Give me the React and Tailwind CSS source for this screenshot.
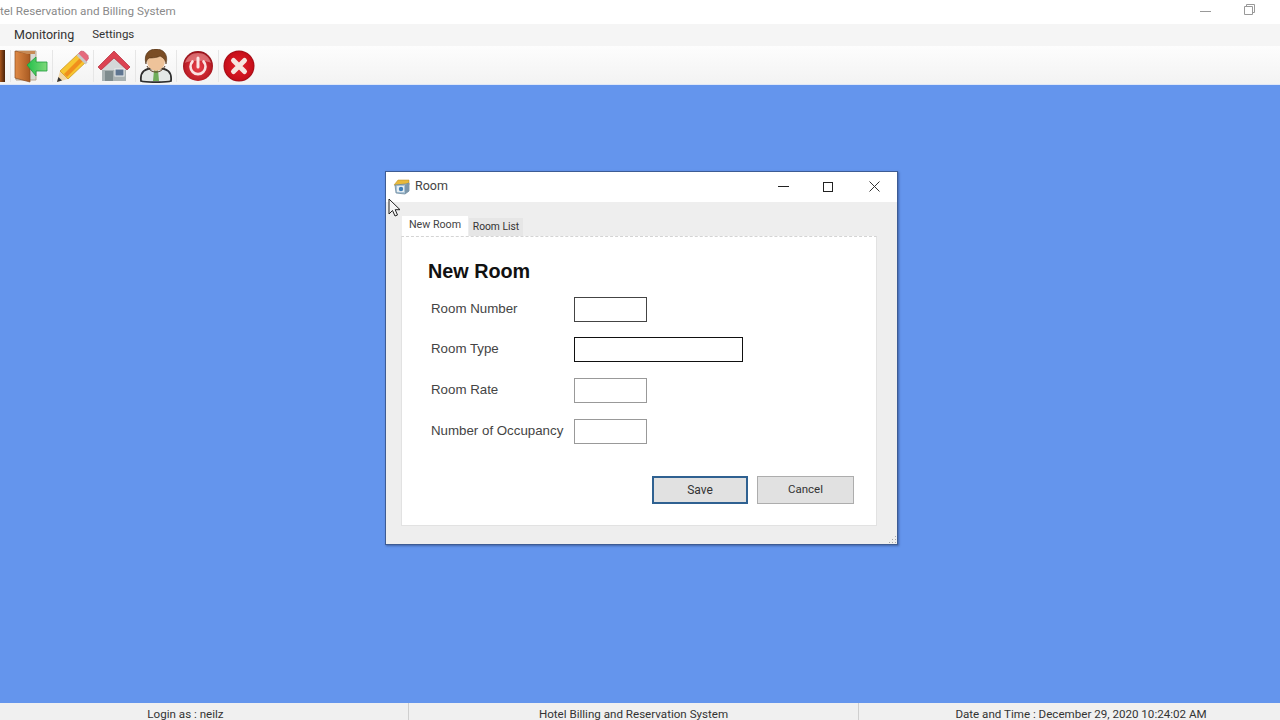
const sans = "font-['Liberation_Sans',Arial,sans-serif]";
const ui = "font-['Roboto',sans-serif]";

function DoorIcon() {
  return (
    <svg width="36" height="34" viewBox="0 0 36 34">
      <defs>
        <linearGradient id="door" x1="0" x2="1"><stop offset="0" stopColor="#e08a45" /><stop offset="1" stopColor="#a85a22" /></linearGradient>
        <linearGradient id="arrow" x1="0" x2="1"><stop offset="0" stopColor="#22c04a" /><stop offset="1" stopColor="#7fd87a" /></linearGradient>
      </defs>
      <path d="M3 2h20v29H3z" fill="#d9d9d4" stroke="#b9a58f" strokeWidth="1" />
      <path d="M2 2l15 3v28L2 29z" fill="url(#door)" stroke="#8a4a1c" strokeWidth=".7" />
      <path d="M4 2h18v3H14z" fill="#c78a55" />
      <path d="M14 16L23 8v5h11v9H23v5z" fill="url(#arrow)" stroke="#1f9c3c" strokeWidth=".8" />
    </svg>
  );
}

function PencilIcon() {
  return (
    <svg width="34" height="34" viewBox="0 0 34 34">
      <path d="M1 33l3-11 8 8z" fill="#f2d7a8" />
      <path d="M1 33l1.400-5 3.600 3.600z" fill="#333" />
      <path d="M4 22L22 5l8 8-18 17z" fill="#f7c531" stroke="#c98f14" strokeWidth=".7" />
      <path d="M8 25L25 8l3 3-17 17z" fill="#f08f1d" />
      <path d="M22 5l3-3 3 .5 4 4 .5 3-2.500 3.500z" fill="#e5697c" stroke="#b94a5a" strokeWidth=".5" />
      <path d="M20.500 6.500l2-2 9 9-2 2z" fill="#c8c8c8" />
    </svg>
  );
}

function HouseIcon() {
  return (
    <svg width="34" height="34" viewBox="0 0 34 34">
      <path d="M5 16L17 5l12 11v16H5z" fill="#d4d8d8" />
      <path d="M5 21h24v11H5z" fill="#a9b2b3" />
      <path d="M1 18L17 2l16 16-3 3L17 9 4 21z" fill="#dc4352" stroke="#b32a3a" strokeWidth=".7" />
      <rect x="8" y="22" width="8" height="10" fill="#7f8c8e" />
      <rect x="18" y="20" width="9" height="7" fill="#5e7590" stroke="#eef0f0" />
    </svg>
  );
}

function PersonIcon() {
  return (
    <svg width="34" height="34" viewBox="0 0 34 34">
      <path d="M2 32c-1-9 3-13 15-13s16 4 15 13c-4 1.500-26 1.500-30 0z" fill="#e4e8e6" stroke="#2e2e2e" strokeWidth="1.800" />
      <path d="M15 21h4l1 11h-6z" fill="#6fae5a" />
      <ellipse cx="17" cy="12" rx="9" ry="10" fill="#eec39a" />
      <path d="M7 15C4 4 11 0 17 0s13 4 10 15c-.5-5-4-7-6-8-3 2-11 2-11 2-2 2-3 3-3 6z" fill="#7a4d25" stroke="#4f3015" strokeWidth=".6" />
      <path d="M8 17c2 4 5 6 9 6s7-2 9-6" fill="none" stroke="#5e4028" strokeWidth="1" />
    </svg>
  );
}

function PowerIcon() {
  return (
    <svg width="32" height="32" viewBox="0 0 32 32">
      <defs>
        <radialGradient id="pw" cx=".5" cy=".55" r=".55"><stop offset="0" stopColor="#e8404a" /><stop offset=".75" stopColor="#c01f28" /><stop offset="1" stopColor="#8f1018" /></radialGradient>
      </defs>
      <circle cx="16" cy="16" r="15" fill="url(#pw)" />
      <path d="M3 13C5 6 10 3 16 3s11 3 13 10c-4-3-22-3-26 0z" fill="#f2a5a8" opacity=".55" />
      <path d="M10.500 11.500a7.500 7.500 0 1 0 11 0" fill="none" stroke="#fbe3e3" strokeWidth="2.600" strokeLinecap="round" />
      <path d="M16 8v9" stroke="#fbe3e3" strokeWidth="3" strokeLinecap="round" />
    </svg>
  );
}

function CloseIcon() {
  return (
    <svg width="32" height="32" viewBox="0 0 32 32">
      <defs>
        <radialGradient id="cl" cx=".5" cy=".5" r=".55"><stop offset="0" stopColor="#e3222c" /><stop offset=".8" stopColor="#c80f1a" /><stop offset="1" stopColor="#7c0a12" /></radialGradient>
      </defs>
      <circle cx="16" cy="16" r="15.500" fill="url(#cl)" />
      <path d="M10.500 10.500l11 11M21.500 10.500l-11 11" stroke="#f6e6e0" strokeWidth="5" strokeLinecap="round" />
    </svg>
  );
}

function RoomIcon() {
  return (
    <svg width="17" height="17" viewBox="0 0 17 17">
      <path d="M1 7l4-5h11v5L6 8z" fill="#e8b93a" stroke="#b98a1f" strokeWidth=".5" />
      <path d="M2 7l11-1 3-1v8l-4 3-9-1z" fill="#a9c3d6" stroke="#5f7d92" strokeWidth=".7" />
      <path d="M4 8h7v6H4z" fill="#e8eef2" />
      <circle cx="8" cy="11" r="2.200" fill="#3d7fb8" />
      <path d="M12 7l4-2v8l-4 3z" fill="#7d97aa" />
    </svg>
  );
}

function ToolButton({ children }) {
  return (
    <div className="w-[41.6px] h-[32px] shrink-0 flex items-center justify-center border-l border-[#e6e6e6]">
      {children}
    </div>
  );
}

function Field({ label, width = "w-[73px]", border, className = "" }) {
  return (
    <div className={`flex items-center h-[25px] ${className}`}>
      <span className={`w-[146px] pl-[3px] -mt-[2px] text-[13.3px] leading-none text-[#444] whitespace-nowrap ${sans}`}>{label}</span>
      <div className={`${width} h-[25px] bg-white border ${border}`} />
    </div>
  );
}

export default function App() {
  return (
    <div className="relative w-[1280px] h-[720px] overflow-hidden flex flex-col bg-[#6495ed]">
      <div className="h-[24px] shrink-0 bg-white flex items-center justify-between overflow-hidden">
        <span className={`-ml-[15px] text-[11.7px] text-[#8a8a8a] whitespace-nowrap ${ui}`}>Hotel Reservation and Billing System</span>
        <div className="flex items-center mr-[25px] gap-[33px]">
          <div className="w-[11px] h-px bg-[#999] -mt-[1px]" />
          <svg width="11" height="11" viewBox="0 0 11 11" className="-mt-[6px]">
            <path d="M.5 2.500h8v8h-8zM2.500 2.500v-2h8v8h-2" fill="none" stroke="#999" />
          </svg>
        </div>
      </div>

      <div className={`h-[22px] shrink-0 bg-[#f5f5f5] flex items-center pl-[14px] gap-[18px] text-[#333] ${ui}`}>
        <span className="text-[12.5px]">Monitoring</span>
        <span className="text-[11.5px]">Settings</span>
      </div>

      <div className="h-[39px] shrink-0 pt-[1px] bg-gradient-to-b from-[#fdfdfd] to-[#f3f3f3] flex items-center border-b border-[#dfe7f7]">
        <div className="w-[10px] h-[32px] shrink-0">
          <div className="w-[5px] h-[32px] bg-gradient-to-r from-[#a8561c] to-[#4a2208]" />
        </div>
        <ToolButton><DoorIcon /></ToolButton>
        <ToolButton><PencilIcon /></ToolButton>
        <ToolButton><HouseIcon /></ToolButton>
        <ToolButton><PersonIcon /></ToolButton>
        <ToolButton><PowerIcon /></ToolButton>
        <ToolButton><CloseIcon /></ToolButton>
      </div>

      <div className="relative flex-1">
        <div className="absolute left-[385px] top-[86px] w-[513px] h-[374px] flex flex-col bg-[#eeeeee] border border-[#3d5c94] shadow-[1px_1px_2px_rgba(30,50,100,0.5)]">
          <div className="h-[30px] shrink-0 bg-white flex items-center pl-[7px] pb-[1px]">
            <RoomIcon />
            <span className={`ml-[5px] text-[12.5px] text-[#444] ${ui}`}>Room</span>
            <div className="ml-auto flex items-center mr-[17px]">
              <div className="w-[11px] h-px bg-[#222] mr-[34px]" />
              <div className="w-[10px] h-[10px] border border-[#222] mr-[36px]" />
              <svg width="11" height="11" viewBox="0 0 11 11">
                <path d="M.5.5l10 10M10.500.5l-10 10" stroke="#333" fill="none" />
              </svg>
            </div>
          </div>

          <div className="flex-1 flex flex-col pl-[15px] pr-[20px] pt-[14px] pb-[18px] relative">
            <div className={`h-[20px] shrink-0 pl-px flex items-end leading-none ${ui}`}>
              <div className="w-[66px] h-[20px] bg-white text-[10.7px] text-[#444] flex items-center justify-center pb-px">New Room</div>
              <div className="w-[54px] h-[18px] ml-px bg-[#e6e6e6] text-[10.3px] text-[#333] flex items-center justify-center pt-px">Room List</div>
            </div>
            <div className="flex-1 bg-white border border-[#e2e2e2] [border-top-style:dashed] border-t-[#d4d4d4] pl-[26px] pr-[22px] pt-[22px]">
              <h1 className={`text-[19.800px] leading-[24px] font-bold text-[#111] ${sans}`}>New Room</h1>
              <div className="mt-[14px] flex flex-col">
                <Field label="Room Number" border="border-[#444]" />
                <Field label="Room Type" width="w-[169px]" border="border-[#111]" className="mt-[15px]" />
                <Field label="Room Rate" border="border-[#999]" className="mt-[16px]" />
                <Field label="Number of Occupancy" border="border-[#999]" className="mt-[16px]" />
              </div>
              <div className={`mt-[32px] flex justify-end gap-[9px] text-[#333] ${ui}`}>
                <div className="w-[96px] h-[28px] text-[12px] bg-[#e1e1e1] border-2 border-[#2f6191] flex items-center justify-center">Save</div>
                <div className="w-[97px] h-[28px] text-[11.5px] bg-[#e1e1e1] border border-[#adadad] flex items-center justify-center">Cancel</div>
              </div>
            </div>
            <svg width="9" height="9" viewBox="0 0 9 9" className="absolute right-0 bottom-0">
              <path d="M7 1h1v1H7zM4 4h1v1H4zM7 4h1v1H7zM1 7h1v1H1zM4 7h1v1H4zM7 7h1v1H7z" fill="#a8a8a8" />
            </svg>
          </div>
        </div>

        <svg width="14" height="21" viewBox="0 0 14 21" className="absolute left-[388px] top-[113px]">
          <path d="M1 1v15l3.500-3.500L7 18l2.500-1-2.300-5.300H12z" fill="#f4f4f4" stroke="#222" strokeWidth="1" />
        </svg>
      </div>

      <div className={`h-[17px] shrink-0 bg-[#f0f0f0] flex text-[11.6px] leading-[22px] text-[#333] ${ui}`}>
        <div className="w-[409px] pr-[37px] text-center whitespace-nowrap border-r border-[#cfcfcf]">Login as : neilz</div>
        <div className="w-[450px] text-center whitespace-nowrap border-r border-[#cfcfcf]">Hotel Billing and Reservation System</div>
        <div className="w-[421px] pl-[23px] text-center whitespace-nowrap">Date and Time : December 29, 2020 10:24:02 AM</div>
      </div>
    </div>
  );
}
